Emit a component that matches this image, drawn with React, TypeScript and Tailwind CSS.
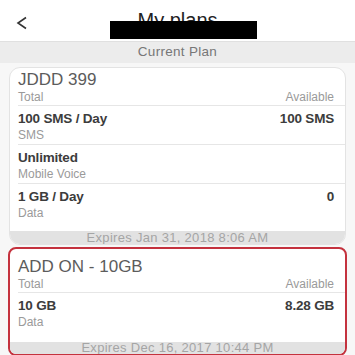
const font = { fontFamily: '"Liberation Sans", Arial, sans-serif' };

type Row = { value: string; label: string; avail?: string };

const basePlan: Row[] = [
  { value: '100 SMS / Day', label: 'SMS', avail: '100 SMS' },
  { value: 'Unlimited', label: 'Mobile Voice' },
  { value: '1 GB / Day', label: 'Data', avail: '0' },
];

function PlanRow({ row, last }: { row: Row; last: boolean }) {
  return (
    <div className={`ml-[8px] pr-[11px] ${last ? 'pt-[5px]' : 'pt-[5px] pb-[1px] border-b border-[#e6e6e6]'}`}>
      <div className="flex justify-between h-[16px] items-center text-[13.5px] font-bold text-[#3c3c3c] tracking-[-0.2px]">
        <span>{row.value}</span>
        {row.avail && <span>{row.avail}</span>}
      </div>
      <div className="h-[16px] flex items-center text-[12px] text-[#9a9a9a]">{row.label}</div>
    </div>
  );
}

function PlanHead({ name }: { name: string }) {
  return (
    <div className="ml-[8px] pr-[11px] border-b border-[#e6e6e6] pb-[1px]">
      <div className="h-[19px] flex items-center text-[17px] text-[#5c5c5c]">{name}</div>
      <div className="flex justify-between h-[15px] items-center text-[12px] text-[#9a9a9a]">
        <span>Total</span>
        <span>Available</span>
      </div>
    </div>
  );
}

export default function App() {
  return (
    <div className="w-[355px] h-[355px] overflow-hidden bg-[#f7f7f7]" style={font}>
      <div className="relative h-[42px] bg-white border-b border-[#e0e0e0]">
        <svg className="absolute left-[16px] top-[16px]" width="12" height="14" viewBox="0 0 12 14">
          <polyline points="10,1.5 2,7 10,12.5" fill="none" stroke="#333" strokeWidth="1.6" />
        </svg>
        <div className="pt-[8px] text-center text-[20px] leading-[24px] text-[#222]">My plans</div>
        <div className="absolute left-[110px] top-[21px] w-[147px] h-[18px] bg-black" />
      </div>
      <div className="h-[21px] bg-[#ececec] flex items-center justify-center text-[13.5px] text-[#777] tracking-[0.3px]">
        Current Plan
      </div>

      <div className="mx-[9px] mt-[4px] bg-white border border-[#e3e3e3] rounded-[11px] overflow-hidden">
        <div className="pt-[2px]">
          <PlanHead name="JDDD 399" />
          {basePlan.map((r, i) => (
            <PlanRow key={i} row={r} last={i === basePlan.length - 1} />
          ))}
        </div>
        <div className="mt-[10px] h-[13px] bg-[#e2e2e2] flex items-center justify-center text-[13px] text-[#a5a5a5] tracking-[0.3px]">
          Expires Jan 31, 2018 8:06 AM
        </div>
      </div>

      <div className="mx-[8px] mt-[2px] bg-white border-2 border-[#c4323e] rounded-[8px] overflow-hidden">
        <div className="pt-[8px]">
          <PlanHead name="ADD ON - 10GB" />
          <PlanRow row={{ value: '10 GB', label: 'Data', avail: '8.28 GB' }} last />
        </div>
        <div className="mt-[12px] h-[12px] bg-[#e2e2e2] flex items-center justify-center text-[13px] text-[#a5a5a5] tracking-[0.3px]">
          Expires Dec 16, 2017 10:44 PM
        </div>
      </div>
    </div>
  );
}
